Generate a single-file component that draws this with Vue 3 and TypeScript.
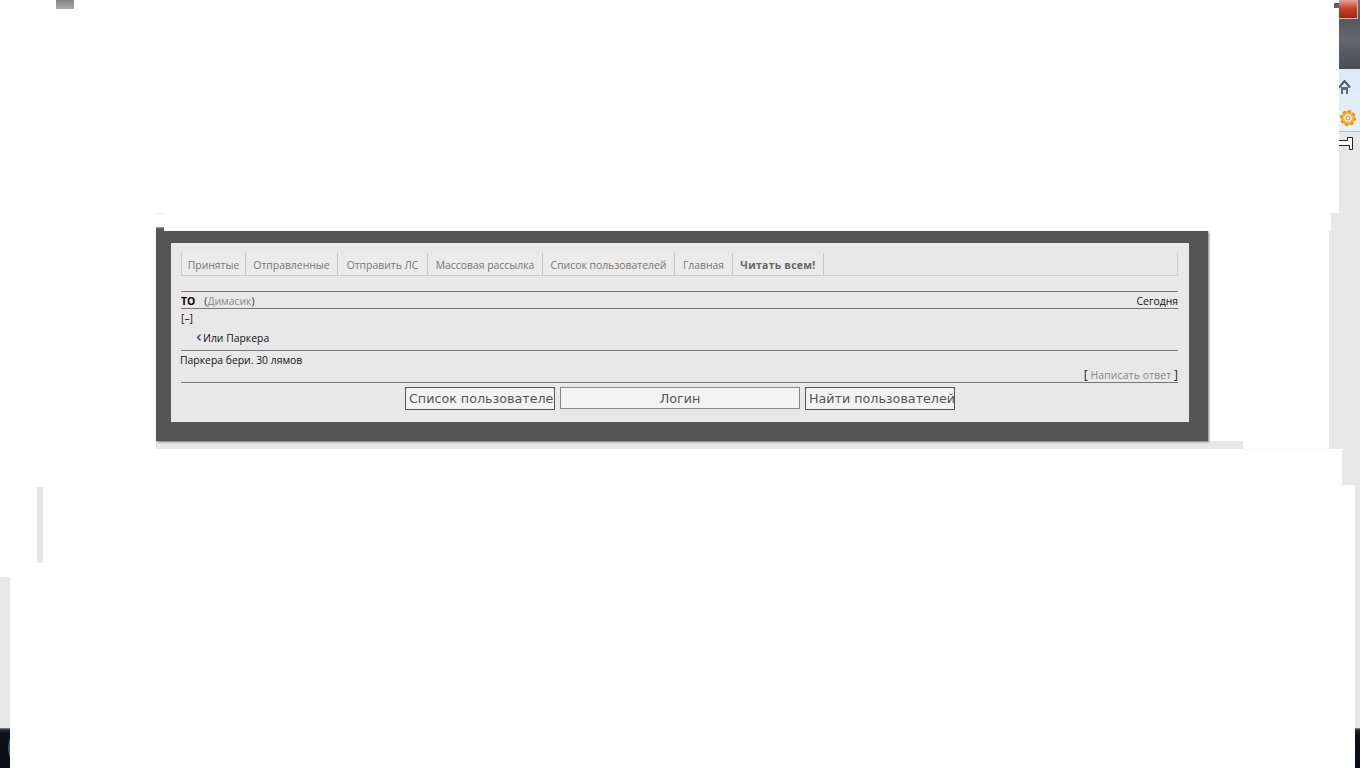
<template>
  <div class="screen">
    <!-- leftovers of the desktop around the page -->
    <div class="patch chip"></div>
    <div class="patch tick"></div>
    <div class="patch notch"></div>
    <div class="patch under-panel"></div>
    <div class="patch under-line"></div>
    <div class="patch side-a"></div>
    <div class="patch side-b"></div>
    <div class="patch side-c"></div>
    <div class="patch side-d"></div>
    <div class="patch side-e"></div>
    <div class="patch left-bar"></div>
    <div class="patch left-block"></div>
    <div class="patch task-left"><span class="orb"></span></div>
    <div class="patch task-right"></div>
    <div class="patch chrome"></div>
    <div class="patch close"></div>
    <div class="patch close-mark"></div>
    <div class="patch toolbar">
      <svg class="home" viewBox="0 0 12 14" width="12" height="14">
        <path d="M0 7.500 L5.500 1 L11 7.500" fill="none" stroke="#46586a" stroke-width="2" />
        <path d="M2 7 H9 V14 H7 V10 H4 V14 H2 Z" fill="#5c6b7a" />
      </svg>
      <svg class="gear" viewBox="0 0 16 16" width="16" height="16">
        <circle cx="8" cy="8" r="5.500" fill="none" stroke="#f5b432" stroke-width="3.500" />
        <circle cx="8" cy="8" r="7" fill="none" stroke="#d98a10" stroke-width="2" stroke-dasharray="2.500 3" />
        <circle cx="8" cy="8" r="2" fill="#fdf2d0" stroke="#b87a10" stroke-width="0.800" />
      </svg>
    </div>
    <svg class="patch pin" viewBox="0 0 15 14" width="15" height="14">
      <path d="M0 3.500 H8.500 V0.500 H13.500 V12.500 H10.500 V8.500 H0" fill="#fff" stroke="#222" stroke-width="1" />
    </svg>

    <main class="panel">
      <div class="inner">
        <nav class="tabs">
          <a
            v-for="tab in tabs"
            :key="tab.label"
            class="tab"
            :class="{ active: tab.active }"
            :style="{ width: tab.width + 'px' }"
          >{{ tab.label }}</a>
        </nav>

        <div class="msg-head">
          <span class="subject"><b>ТО</b><span class="from">(<a>Димасик</a>)</span></span>
          <span>Сегодня</span>
        </div>
        <div class="toggle">[–]</div>
        <div class="quote-title">
          <svg class="arrow" viewBox="0 0 5 7" width="5" height="7">
            <path d="M4 0 L0.500 3.500 L4 7 L5 6 L2.800 3.500 L5 1 Z" fill="#5a4aa0" />
          </svg>
          Или Паркера
        </div>
        <div class="msg-body">Паркера бери. 30 лямов</div>
        <div class="reply"><i class="br-l">[</i> <a>Написать ответ</a> <i class="br-r">]</i></div>

        <div class="actions">
          <button class="btn first">Список пользователе</button>
          <div class="btn login">Логин</div>
          <button class="btn last">Найти пользователей</button>
        </div>
      </div>
    </main>
  </div>
</template>

<script setup lang="ts">
const tabs = [
  { label: 'Принятые', width: 64 },
  { label: 'Отправленные', width: 92 },
  { label: 'Отправить ЛС', width: 90 },
  { label: 'Массовая рассылка', width: 115 },
  { label: 'Список пользователей', width: 132 },
  { label: 'Главная', width: 58 },
  { label: 'Читать всем!', width: 91, active: true }
]
</script>

<style>
html,
body {
  margin: 0;
  background: #fff;
}
</style>

<style scoped>
.screen {
  position: relative;
  width: 1360px;
  height: 768px;
  overflow: hidden;
  background: #fff;
  font-family: 'Open Sans', 'Liberation Sans', sans-serif;
  font-size: 10.4px;
  color: #111;
  padding-top: 231px;
  box-sizing: border-box;
}

.patch {
  position: absolute;
  background: #e8e8e8;
}

.chip { left: 56px; top: 0; width: 18px; height: 9px; background: linear-gradient(#858585, #aaa); }
.tick { left: 156px; top: 213px; width: 8px; height: 1px; background: #eee; }
.notch { left: 156px; top: 227px; width: 8px; height: 4px; background: linear-gradient(#aaa 0, #555 2px); }
.under-panel { left: 156px; top: 441px; width: 1087px; height: 8px; }
.under-line { left: 1243px; top: 449px; width: 86px; height: 1px; background: #f0f0f0; }
.side-a { left: 1339px; top: 131px; width: 21px; height: 90px; }
.side-b { left: 1331px; top: 213px; width: 29px; height: 20px; }
.side-c { left: 1329px; top: 231px; width: 31px; height: 218px; }
.side-d { left: 1342px; top: 449px; width: 18px; height: 36px; }
.side-e { left: 1355px; top: 485px; width: 5px; height: 243px; }
.left-bar { left: 37px; top: 487px; width: 6px; height: 76px; }
.left-block { left: 0; top: 577px; width: 10px; height: 151px; }

.task-left {
  left: 0;
  top: 728px;
  width: 10px;
  height: 40px;
  background: linear-gradient(#8b929a 0, #20262c 2px, #0c1116 6px, #0a0e12);
  overflow: hidden;
}
.orb {
  position: absolute;
  left: 8px;
  top: 9px;
  width: 8px;
  height: 22px;
  border-radius: 50%;
  background: #2a5a86;
}
.task-right {
  left: 1355px;
  top: 728px;
  width: 5px;
  height: 40px;
  background: linear-gradient(#8b929a 0, #20262c 2px, #0c1116 8px, #0a0e12);
}

.chrome {
  left: 1339px;
  top: 0;
  width: 21px;
  height: 69px;
  background: linear-gradient(#6c6f72 0, #54595e 30%, #63686d 55%, #4a4e52 100%);
}
.close {
  left: 1339px;
  top: 0;
  width: 18px;
  height: 18px;
  background: linear-gradient(#e8a396, #c8452f 45%, #a02410);
  border-right: 1px solid #c9b8b4;
  border-bottom: 1px solid #c9b8b4;
}
.close-mark { left: 1334px; top: 3px; width: 5px; height: 5px; background: #5d5f63; }

.toolbar {
  left: 1339px;
  top: 69px;
  width: 21px;
  height: 63px;
  background: linear-gradient(#dbe8f6, #e6f0fb);
  border-bottom: 1px solid #b4bfcb;
  box-sizing: border-box;
}
.home { position: absolute; left: 0; top: 11px; }
.gear { position: absolute; left: 1px; top: 41px; }
.pin { left: 1339px; top: 137px; background: none; }

.panel {
  position: relative;
  width: 1052px;
  height: 210px;
  margin-left: 156px;
  padding: 12px 19px 19px 15px;
  box-sizing: border-box;
  background: #555;
  box-shadow: 1px 1px 2px #777;
}

.inner {
  height: 179px;
  padding: 10px 11px 0 10px;
  box-sizing: border-box;
  background: #e8e8e8;
}

.tabs {
  display: flex;
  height: 23px;
  box-sizing: border-box;
  border-left: 1px solid #ccc;
  border-right: 1px solid #ccc;
  border-bottom: 1px solid #ccc;
}

.tab {
  height: 23px;
  box-sizing: border-box;
  line-height: 24px;
  text-align: center;
  color: #777;
  background: #ebebeb;
  border-right: 1px solid #c4c4c4;
  border-bottom: 1px solid #ccc;
  white-space: nowrap;
}

.tab.active {
  font-weight: 700;
  letter-spacing: 0.3px;
  color: #666;
}

.msg-head {
  display: flex;
  justify-content: space-between;
  height: 18px;
  margin-top: 15px;
  box-sizing: border-box;
  line-height: 18px;
  border-top: 1px solid #777;
  border-bottom: 1px solid #777;
}

.subject b {
  color: #000;
}

.from {
  margin-left: 9px;
  color: #234;
}

.from a {
  color: #888;
}

.toggle {
  height: 18px;
  line-height: 18px;
}

.quote-title {
  display: flex;
  align-items: center;
  height: 24px;
  padding: 0 0 2px 15px;
  box-sizing: border-box;
  border-bottom: 1px solid #777;
}

.arrow {
  margin-right: 2px;
}

.msg-body {
  height: 19px;
  line-height: 18px;
  margin-left: -1px;
}

.reply {
  height: 13px;
  line-height: 9px;
  box-sizing: border-box;
  text-align: right;
  border-bottom: 1px solid #777;
}

.reply a {
  color: #888;
  letter-spacing: 0.15px;
}

.br-l,
.br-r {
  font-style: normal;
  font-size: 12px;
  color: #222;
}

.actions {
  display: flex;
  justify-content: center;
  gap: 5px;
  margin-top: 4px;
  padding-left: 1px;
}

.btn {
  display: block;
  height: 23px;
  padding: 0 0 0 3px;
  box-sizing: border-box;
  background: #f3f3f3;
  border: 1px solid #555;
  font-family: 'DejaVu Sans', sans-serif;
  font-size: 12.7px;
  line-height: 21px;
  color: #555;
  text-align: left;
  overflow: hidden;
  white-space: nowrap;
}

.first,
.last {
  width: 150px;
}

.login {
  width: 240px;
  height: 22px;
  padding: 0;
  border-color: #888;
  text-align: center;
}
</style>
